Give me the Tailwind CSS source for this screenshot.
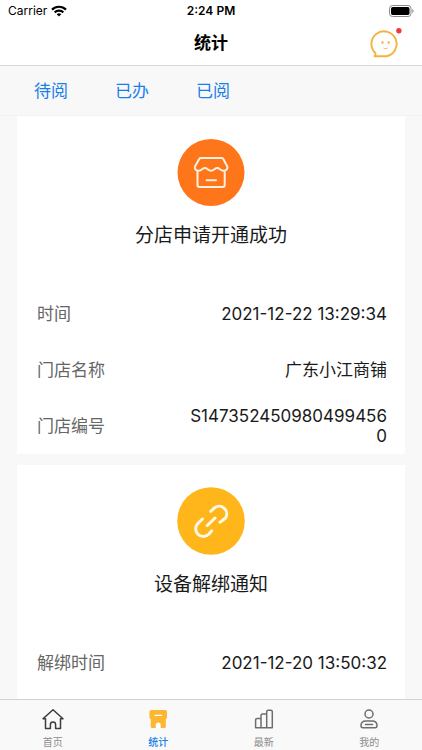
<!DOCTYPE html>
<html lang="zh-CN">
<head>
<meta charset="utf-8">
<meta name="viewport" content="width=device-width, initial-scale=1">
<title>统计</title>
<script src="https://cdn.jsdelivr.net/npm/@tailwindcss/browser@4"></script>
</head>
<body class="flex h-dvh flex-col bg-[#f8f8f8] font-['Inter','Noto_Sans_CJK_SC',sans-serif] text-[#1a1a1a]">
<header class="shrink-0 border-b border-[#d8d8d8] bg-white text-black">
  <div class="grid h-[22px] grid-cols-3 items-center px-2 text-xs">
    <div class="flex items-center gap-1">
      <span>Carrier</span>
      <svg class="h-3 w-4" viewBox="0 0 16 12" fill="none" stroke="#000" stroke-width="2.2" aria-hidden="true"><path d="M1 4.6a10 10 0 0 1 14 0M3.7 7.4a6.1 6.1 0 0 1 8.6 0"/><path d="M8 11.6 5.7 9.3a3.3 3.3 0 0 1 4.6 0z" fill="#000" stroke="none"/></svg>
    </div>
    <span class="text-center font-semibold">2:24 PM</span>
    <svg class="h-3 w-[25px] justify-self-end" viewBox="0 0 25 12" aria-hidden="true"><rect x=".5" y=".5" width="21.5" height="11" rx="3" fill="#fff" stroke="#8a8a8a"/><rect x="2" y="2" width="18.5" height="8" rx="1.7"/><path d="M23.3 4v4c1.7-.7 1.7-3.3 0-4z" fill="#8a8a8a"/></svg>
  </div>
  <div class="grid h-[43px] grid-cols-3 items-center px-5 pt-px">
    <h1 class="col-start-2 text-center text-[17px] font-bold">统计</h1>
    <button type="button" aria-label="客服消息" class="justify-self-end">
      <svg class="h-8 w-8" viewBox="0 0 32 32" fill="none"><path d="M4.600 28.300c.9-1.300 1.200-2.400.7-3.300A12.600 12.600 0 1 1 16.200 28.300z" stroke="#f5b23e" stroke-width="1.900" stroke-linejoin="round"/><path d="M12.500 13.200v2.600M18.700 13.200v2.600" stroke="#f5b23e" stroke-width="1.900"/><path d="M13.500 20c1.200.9 3 .9 4.200 0" stroke="#f5b23e"/><circle cx="28.900" cy="2.800" r="2.700" fill="#f0383f"/></svg>
    </button>
  </div>
</header>
<nav aria-label="状态" class="flex h-[50px] shrink-0 items-center gap-[47px] border-b border-[#f2f2f2] px-[34px] pt-0.5 text-[17px] text-[#1a7fe8]">
  <a href="#">待阅</a>
  <a href="#">已办</a>
  <a href="#">已阅</a>
</nav>
<main class="flex min-h-0 flex-1 flex-col gap-[11px] overflow-y-auto px-[17px] [scrollbar-width:none]">
  <article class="shrink-0 bg-white pt-[22px]">
    <svg class="mx-auto h-[68px] w-[68px]" viewBox="0 0 68 68" fill="none" aria-hidden="true"><circle cx="34" cy="34.500" r="33.500" fill="#ff7519"/><g stroke="#fff0e2" stroke-width="2" stroke-linejoin="round" stroke-linecap="round"><path d="M24 20h20.500q1.200 0 1.800 1l4 7.500c1 2.300-1.300 4.200-4 4.200-3 0-3.500-2.700-6-2.700s-3.200 2.700-6.200 2.700S30.300 30 27.900 30s-3.200 2.700-6.200 2.700c-2.700 0-4.700-1.900-3.700-4.200l4.200-7.500q.6-1 1.800-1z"/><path d="M20.500 33.500V47q0 2 2 2h23.200q2 0 2-2V33.500M29.500 42.300h9.500"/></g></svg>
    <h2 class="mt-4 text-center text-[19px] leading-7">分店申请开通成功</h2>
    <dl class="mt-9 pr-[18px] pl-5 text-[17px] leading-5">
      <div class="flex min-h-14 items-center justify-between"><dt class="text-[#666]">时间</dt><dd class="text-right">2021-12-22 13:29:34</dd></div>
      <div class="flex min-h-14 items-center justify-between"><dt class="text-[#666]">门店名称</dt><dd class="text-right">广东小江商铺</dd></div>
      <div class="flex min-h-14 items-center justify-between"><dt class="text-[#666]">门店编号</dt><dd class="w-[58%] text-right break-all">S1473524509804994560</dd></div>
    </dl>
  </article>
  <article class="shrink-0 bg-white pt-[22px] pb-14">
    <svg class="mx-auto h-[68px] w-[68px]" viewBox="0 0 68 68" fill="none" aria-hidden="true"><circle cx="34" cy="34" r="33.800" fill="#ffb61a"/><g stroke="#fff8e6" stroke-width="3" stroke-linecap="round" stroke-linejoin="round"><path d="M33.700 24.300 37.700 20.700A7.600 7.600 0 0 1 48.300 31.300L43 35.200M25.400 32 20.900 36.400A7.700 7.700 0 0 0 31.800 47.300L34.700 43.800M30.300 38.500 38 31"/></g></svg>
    <h2 class="mt-4 text-center text-[19px] leading-7">设备解绑通知</h2>
    <dl class="mt-9 pr-[18px] pl-5 text-[17px] leading-5">
      <div class="flex min-h-14 items-center justify-between"><dt class="text-[#666]">解绑时间</dt><dd class="text-right">2021-12-20 13:50:32</dd></div>
    </dl>
  </article>
</main>
<nav aria-label="主导航" class="grid h-[51px] shrink-0 grid-cols-4 border-t border-[#d2d2d2] bg-[#f9f9f9] pt-2 text-[10px] leading-4 text-[#8c8c8c]">
  <a href="#" class="flex flex-col items-center gap-[3px]">
    <svg class="h-[23px] w-6" viewBox="0 0 24 23" fill="none" stroke="#3c3c3c" stroke-width="1.500" stroke-linejoin="round" stroke-linecap="round" aria-hidden="true"><path d="M4.500 10.800H2L12 1.800 22 10.800H19.500V20.600H14.600V16.500a2.600 2.600 0 0 0-5.200 0V20.600H4.500z"/></svg>
    <span>首页</span>
  </a>
  <a href="#" aria-current="page" class="flex flex-col items-center gap-[3px] font-medium text-[#1a7fe8]">
    <svg class="h-[23px] w-6" viewBox="0 0 24 23" aria-hidden="true"><path d="M5 2H19.500a1.500 1.500 0 0 1 1.500 1.500V9.500a1.500 1.500 0 0 1-1.200 1.500V18.500a1.500 1.500 0 0 1-1.500 1.500H6.200A1.500 1.500 0 0 1 4.700 18.500V11A1.500 1.500 0 0 1 3.500 9.500V3.500A1.500 1.500 0 0 1 5 2z" fill="#fdb62f"/><path d="M9 7.300h6.500" stroke="#fff" stroke-width="1.300" stroke-linecap="round"/><path d="M9.700 20v-3a2.500 2.500 0 0 1 5 0v3z" fill="#fff"/></svg>
    <span>统计</span>
  </a>
  <a href="#" class="flex flex-col items-center gap-[3px]">
    <svg class="h-[23px] w-6" viewBox="0 0 24 23" fill="none" stroke="#6e6e6e" stroke-width="1.500" stroke-linejoin="round" aria-hidden="true"><path d="M3.600 19.800V12q0-1.500 1.500-1.500H9V19.800zM9 19.800V7.500Q9 6 10.500 6h4.200V19.800zM14.700 19.800V3.700q0-1.500 1.500-1.500h2.600q1.500 0 1.500 1.500V19.800z"/></svg>
    <span>最新</span>
  </a>
  <a href="#" class="flex flex-col items-center gap-[3px]">
    <svg class="h-[23px] w-6" viewBox="0 0 24 23" fill="none" stroke="#6e6e6e" stroke-width="1.500" stroke-linecap="round" aria-hidden="true"><circle cx="12" cy="6" r="4"/><path d="M8.800 13h6.400q4.800 0 4.800 4.800 0 2-2 2H6q-2 0-2-2Q4 13 8.800 13zM8.500 16.400h7"/></svg>
    <span>我的</span>
  </a>
</nav>
</body>
</html>
